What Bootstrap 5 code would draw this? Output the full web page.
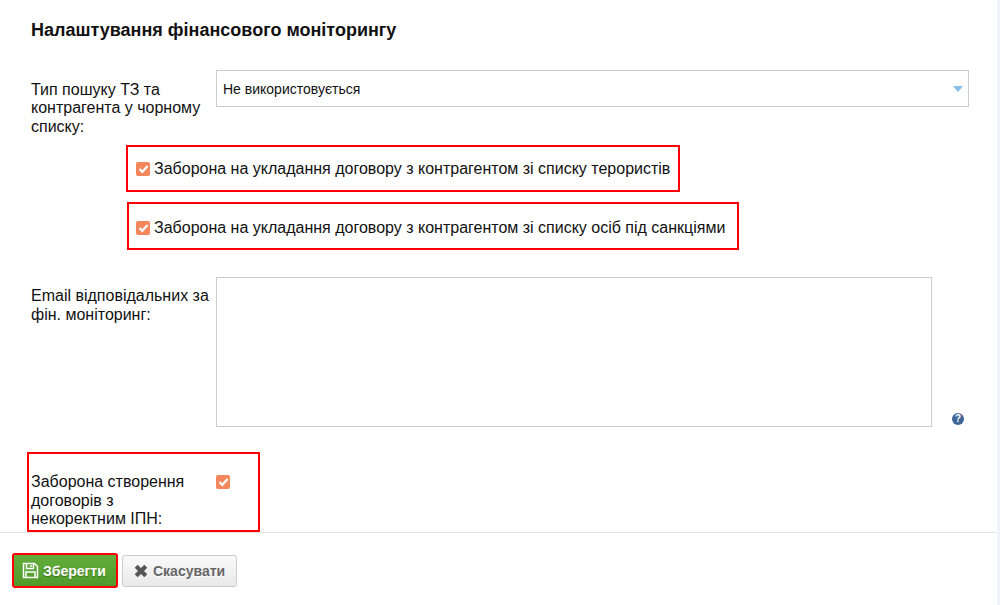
<!DOCTYPE html>
<html lang="uk">
<head>
    <meta charset="UTF-8">
    <meta name="viewport" content="width=device-width, initial-scale=1.0">
    <title>Налаштування фінансового моніторингу</title>
    <link href="https://cdn.jsdelivr.net/npm/bootstrap@5.3.0/dist/css/bootstrap.min.css" rel="stylesheet">
    <style>
        html, body { height: 605px; overflow: hidden; }
        body { font-family: "Liberation Sans", Arial, sans-serif; font-size: 16px; line-height: 18.4px; color: #111; background: #fff; }
        .page-wrap { width: 997px; height: 605px; border-right: 3px solid #f0f3fa; box-sizing: content-box; }
        .settings-area { height: 532px; padding: 20px 28px 0 31px; }
        .settings-title { font-size: 18px; font-weight: 700; line-height: 20px; margin: 0 0 30px; color: #111; }
        .field-label { width: 185px; flex: none; padding-top: 11px; }
        .select-box { width: 753px; height: 37px; flex: none; border: 1px solid #ccc; padding: 2px 5px 0 6px; font-size: 14px; }
        .select-arrow { width: 0; height: 0; margin-top: -1px; border-left: 5px solid transparent; border-right: 5px solid transparent; border-top: 6px solid #85bde8; }
        .red-frame { border: 2px solid #f00; }
        .check-frame-a { width: 554px; height: 47px; margin: 9px 0 0 95px; padding-left: 8px; }
        .check-frame-b { width: 612px; height: 48px; margin: 10px 0 0 96px; padding: 4px 0 0 7px; }
        .tick-box { width: 14px; height: 14px; flex: none; border-radius: 2px; background: #f4865b; display: flex; align-items: center; justify-content: center; margin-right: 4px; }
        .email-row { margin-top: 27px; }
        .email-label { padding-top: 10px; }
        .email-input { width: 716px; height: 150px; flex: none; border: 1px solid #ccc; }
        .help-mark { width: 12px; height: 12px; flex: none; margin: 0 0 2px 20px; border-radius: 50%; background: #3f6596; color: #fff; font-size: 10px; font-weight: 700; line-height: 12px; text-align: center; }
        .ipn-frame { width: 233px; height: 80px; margin: 25px 0 0 -4px; padding: 19px 0 0 2px; }
        .ipn-label { width: 185px; flex: none; padding-right: 8px; }
        .ipn-tick { margin-top: 2px; }
        .footer-bar { height: 73px; border-top: 1px solid #e5e5e5; padding: 20px 0 0 12px; gap: 4px; }
        .btn-save, .btn-cancel { font-size: 14px; font-weight: 700; line-height: 20px; }
        .btn-save { width: 106px; height: 35px; color: #fff; text-shadow: 0 1px 1px rgba(0,0,0,.3); background: linear-gradient(#62ad3a, #4f9a2a); border: 2px solid #f00; border-radius: 3px; padding: 0 0 0 8px; }
        .btn-cancel { width: 115px; height: 32px; margin-top: 2px; color: #666; text-shadow: 0 1px 0 #fff; background: linear-gradient(#fafafa, #e9e9e9); border: 1px solid #ccc; border-radius: 3px; padding: 0 0 0 11px; }
        .cancel-icon { margin-right: 5px; }
    </style>
</head>
<body>
    <div class="page-wrap">
        <div class="settings-area">
            <h1 class="settings-title">Налаштування фінансового моніторингу</h1>

            <!-- Search type -->
            <div class="d-flex">
                <div class="field-label">Тип пошуку ТЗ та контрагента у чорному списку:</div>
                <div class="select-box d-flex align-items-center justify-content-between">
                    <span>Не використовується</span>
                    <span class="select-arrow"></span>
                </div>
            </div>

            <div class="red-frame check-frame-a d-flex align-items-center">
                <span class="tick-box"><svg width="11" height="10" viewBox="0 0 11 10"><path d="M1.5 5 4.3 7.8 9.6 2" fill="none" stroke="#fff" stroke-width="2.2"/></svg></span>
                <span>Заборона на укладання договору з контрагентом зі списку терористів</span>
            </div>
            <div class="red-frame check-frame-b d-flex align-items-center">
                <span class="tick-box"><svg width="11" height="10" viewBox="0 0 11 10"><path d="M1.5 5 4.3 7.8 9.6 2" fill="none" stroke="#fff" stroke-width="2.2"/></svg></span>
                <span>Заборона на укладання договору з контрагентом зі списку осіб під санкціями</span>
            </div>

            <!-- Emails -->
            <div class="email-row d-flex align-items-end">
                <div class="field-label email-label align-self-start">Email відповідальних за фін. моніторинг:</div>
                <div class="email-input"></div>
                <div class="help-mark">?</div>
            </div>

            <div class="red-frame ipn-frame d-flex">
                <div class="ipn-label">Заборона створення договорів з некоректним ІПН:</div>
                <span class="tick-box ipn-tick"><svg width="11" height="10" viewBox="0 0 11 10"><path d="M1.5 5 4.3 7.8 9.6 2" fill="none" stroke="#fff" stroke-width="2.2"/></svg></span>
            </div>
        </div>

        <div class="footer-bar d-flex align-items-start">
            <button type="button" class="btn btn-save d-flex align-items-center">
                <svg class="me-1" width="17" height="17" viewBox="0 0 17 17" fill="none" stroke="#fff" stroke-width="1.5"><path d="M1.5 1.5h11l3 3v11h-14z"/><path d="M4.5 1.5v5h7v-5M9 3v2M4 15.5v-5.5h9v5.5"/></svg>
                Зберегти
            </button>
            <button type="button" class="btn btn-cancel d-flex align-items-center">
                <svg class="cancel-icon" width="14" height="14" viewBox="0 0 14 14"><path d="M2.2 2.2 11.8 11.8M11.8 2.2 2.2 11.8" stroke="#555" stroke-width="4.2"/></svg>
                Скасувати
            </button>
        </div>
    </div>

    <script src="https://cdn.jsdelivr.net/npm/bootstrap@5.3.0/dist/js/bootstrap.bundle.min.js"></script>
</body>
</html>
